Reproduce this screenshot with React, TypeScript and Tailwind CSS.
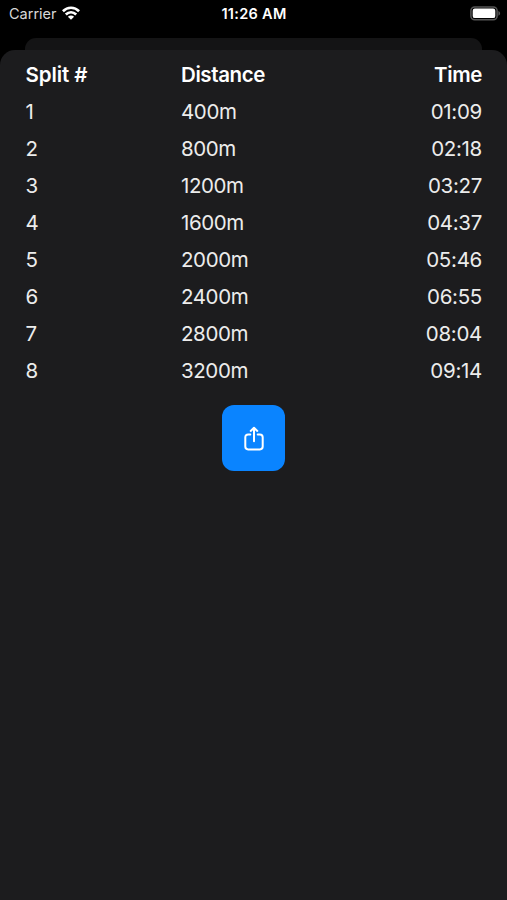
const splits = [
  { distance: "400m", time: "01:09" },
  { distance: "800m", time: "02:18" },
  { distance: "1200m", time: "03:27" },
  { distance: "1600m", time: "04:37" },
  { distance: "2000m", time: "05:46" },
  { distance: "2400m", time: "06:55" },
  { distance: "2800m", time: "08:04" },
  { distance: "3200m", time: "09:14" },
];

function WifiIcon() {
  return (
    <svg width="18" height="14" viewBox="0 0 18 14" fill="none" stroke="#fff" strokeWidth="2.7">
      <path d="M0.9 5.2C5.5 0.6 12.5 0.6 17.1 5.2" />
      <path d="M3.8 8.5C6.9 5.6 11.1 5.6 14.2 8.5" />
      <path d="M9 13.8L5.9 10.8C7.7 9.1 10.3 9.1 12.1 10.8Z" fill="#fff" stroke="none" />
    </svg>
  );
}

function BatteryIcon() {
  return (
    <svg width="31" height="15" viewBox="0 0 31 15" fill="none">
      <rect x="0.9" y="0.9" width="26.2" height="12.9" rx="3.8" stroke="#565656" strokeWidth="1.5" />
      <rect x="2.7" y="2.6" width="22.6" height="9.5" rx="2.2" fill="#fff" />
      <path d="M28.4 5C30.7 5.9 30.7 8.8 28.4 9.7Z" fill="#565656" />
    </svg>
  );
}

function ShareIcon() {
  return (
    <svg
      width="20"
      height="26"
      viewBox="0 0 20 26"
      fill="none"
      stroke="#fff"
      strokeWidth="2"
      strokeLinecap="round"
      strokeLinejoin="round"
    >
      <path d="M6.3 8.6H4.1C2.3 8.6 1.3 9.6 1.3 11.4V20.6C1.3 22.4 2.3 23.4 4.1 23.4H15.9C17.7 23.4 18.7 22.4 18.7 20.6V11.4C18.7 9.6 17.7 8.6 15.9 8.6H13.7" />
      <path d="M10 15.3V2.5" />
      <path d="M6.7 4.9L10 1.8L13.3 4.9" />
    </svg>
  );
}

function StatusBar() {
  return (
    <header className="grid h-[38px] grid-cols-3 items-start pl-[9px] pr-[6px] pt-[4px] leading-5 text-white">
      <div className="flex items-center gap-[5px] text-[14.5px] text-[#d8d8d8]">
        <span>Carrier</span>
        <div className="-mt-[2px]">
          <WifiIcon />
        </div>
      </div>
      <div className="-ml-[2px] text-center text-[14.5px] font-semibold tracking-[0.3px]">11:26 AM</div>
      <div className="flex justify-end pt-[2px]">
        <BatteryIcon />
      </div>
    </header>
  );
}

export default function App() {
  return (
    <div className="flex h-[900px] w-full flex-col overflow-hidden bg-black font-['Inter','Liberation_Sans',sans-serif]">
      <StatusBar />

      {/* edge of the screen behind the sheet */}
      <div className="mx-[25px] h-[12px] shrink-0 rounded-t-[11px] bg-[#141415]" />

      <div className="flex flex-1 flex-col items-center bg-black">
        <main className="flex w-full flex-1 flex-col items-center rounded-t-[15px] bg-[#1c1c1e] pt-[6px]">
          <table className="w-full table-fixed text-[20.5px] leading-[37px] tracking-[-0.4px] text-[#ececec]">
            <thead>
              <tr className="h-[37px] text-white">
                <th className="w-[181px] p-0 pl-[25.5px] text-left font-semibold tracking-[-0.1px]">Split #</th>
                <th className="p-0 text-left font-semibold">Distance</th>
                <th className="p-0 pr-[25px] text-right font-semibold">Time</th>
              </tr>
            </thead>
            <tbody>
              {splits.map((split, i) => (
                <tr key={split.distance} className="h-[37px]">
                  <td className="p-0 pl-[25.5px]">{i + 1}</td>
                  <td className="p-0">{split.distance}</td>
                  <td className="p-0 pr-[25px] text-right tracking-[-0.3px]">{split.time}</td>
                </tr>
              ))}
            </tbody>
          </table>

          <button
            aria-label="Share splits"
            className="mt-[16px] flex h-[66px] w-[63px] items-center justify-center rounded-[12px] bg-[#0a84ff] pt-[2px]"
          >
            <ShareIcon />
          </button>
        </main>
      </div>
    </div>
  );
}
